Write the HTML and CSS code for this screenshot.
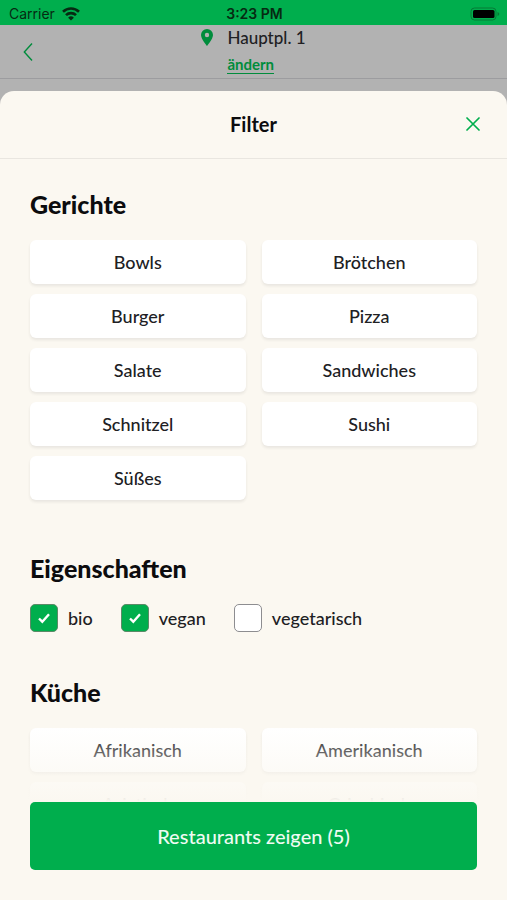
FILE: index.html
```html
<!DOCTYPE html>
<html lang="de">
<head>
<meta charset="utf-8">
<meta name="viewport" content="width=device-width, initial-scale=1">
<title>Filter</title>
<link rel="stylesheet" href="styles.css">
</head>
<body>
<div class="status">
  <div class="carrier">Carrier
    <svg width="18" height="14" viewBox="0 0 18 14" fill="none" stroke="#062a12" stroke-width="2.6" aria-hidden="true"><path d="M1 4.7a11.5 11.5 0 0 1 16 0M4 8.2a7 7 0 0 1 10 0"/><path d="M9 13.6 6.1 10.7a4.2 4.2 0 0 1 5.8 0z" fill="#062a12" stroke="none"/></svg>
  </div>
  <div class="time">3:23 PM</div>
  <svg class="battery" width="30" height="14" viewBox="0 0 30 14" aria-hidden="true"><rect x="1" y="1" width="25" height="12" rx="3.5" fill="none" stroke="#067a37"/><rect x="3" y="3" width="21.500" height="8" rx="1.500"/><path d="M27.500 5v4q1.800-.5 1.800-2t-1.800-2z" fill="#067a37"/></svg>
</div>
<main class="screen">
  <header class="topbar">
    <button class="back" aria-label="Zurück"><svg width="10" height="20" viewBox="0 0 10 20" fill="none" stroke="#008c3c" stroke-width="1.400"><path d="M9 1.500 1.300 10 9 18.500"/></svg></button>
    <div class="location">
      <svg class="pin" width="12" height="17" viewBox="0 0 12 17" aria-hidden="true"><path fill="#008c3c" fill-rule="evenodd" d="M6 0a6 6 0 0 0-6 6c0 4 6 11 6 11s6-7 6-11a6 6 0 0 0-6-6zm0 3.800a2.200 2.200 0 1 1 0 4.400 2.200 2.200 0 0 1 0-4.400z"/></svg>
      <div class="address"><span>Hauptpl. 1</span><a href="#">ändern</a></div>
    </div>
  </header>
  <section class="sheet" role="dialog" aria-labelledby="title">
    <div class="sheet-head">
      <h1 id="title">Filter</h1>
      <button class="close" aria-label="Schließen"><svg width="14" height="14" viewBox="0 0 14 14" fill="none" stroke="#00ae4d" stroke-width="1.700" stroke-linecap="round"><path d="m1 1 12 12M13 1 1 13"/></svg></button>
    </div>
    <div class="content">
      <h2>Gerichte</h2>
      <div class="grid">
        <button>Bowls</button><button>Brötchen</button>
        <button>Burger</button><button>Pizza</button>
        <button>Salate</button><button>Sandwiches</button>
        <button>Schnitzel</button><button>Sushi</button>
        <button>Süßes</button>
      </div>
      <h2>Eigenschaften</h2>
      <div class="checks">
        <label><span class="box"><input type="checkbox" checked><svg viewBox="0 0 14 12" aria-hidden="true"><path d="M2 6.500 5.300 9.700 12 2.300"/></svg></span>bio</label>
        <label><span class="box"><input type="checkbox" checked><svg viewBox="0 0 14 12" aria-hidden="true"><path d="M2 6.500 5.300 9.700 12 2.300"/></svg></span>vegan</label>
        <label><span class="box"><input type="checkbox"></span>vegetarisch</label>
      </div>
      <h2>Küche</h2>
      <div class="grid">
        <button>Afrikanisch</button><button>Amerikanisch</button>
        <button>Asiatisch</button><button>Griechisch</button>
      </div>
    </div>
    <div class="footer"><button class="submit">Restaurants zeigen (5)</button></div>
  </section>
</main>
</body>
</html>
```
FILE: styles.css
```css
* { box-sizing: border-box; }
body {
  margin: 0;
  height: 100vh;
  display: flex;
  flex-direction: column;
  background: #b2b2b2;
  color: #202023;
  font-family: Lato, sans-serif;
  font-size: 18px;
  font-weight: 500;
}
button {
  font: inherit;
  color: inherit;
  border: 0;
  padding: 0;
  background: none;
}
svg { display: block; }
h1, h2 { margin: 0; }

.status {
  height: 25px;
  padding: 2px 7px 0 9px;
  display: grid;
  grid-template-columns: 1fr auto 1fr;
  align-items: center;
  background: #00ae4d;
  color: #062a12;
  font: 14px/23px Inter, sans-serif;
}
.carrier { display: flex; align-items: center; gap: 7px; }
.time { font-weight: 600; }
.battery { justify-self: end; }

.screen { flex: 1; min-height: 0; display: flex; flex-direction: column; }
.topbar {
  height: 54px;
  display: grid;
  grid-template-columns: 1fr auto 1fr;
  align-items: center;
  padding: 0 23px;
  border-bottom: 1px solid #9c9c9f;
}
.back { justify-self: start; }
.location {
  display: flex;
  gap: 14px;
  align-self: start;
}
.pin { margin-top: 4px; }
.address { display: flex; flex-direction: column; align-items: flex-start; gap: 5px; line-height: 26px; font-size: 17px; }
.address span { white-space: nowrap; }
.address a {
  color: #008c3c;
  font-size: 15px;
  font-weight: 700;
  line-height: 17px;
  text-decoration: none;
  border-bottom: 1px solid;
}

.sheet {
  flex: 1;
  min-height: 0;
  margin-top: 12px;
  display: flex;
  flex-direction: column;
  position: relative;
  background: #fbf8f1;
  border-radius: 14px 14px 0 0;
}
.sheet-head {
  flex: none;
  height: 68px;
  padding: 0 27px 2px;
  display: grid;
  grid-template-columns: 1fr auto 1fr;
  align-items: center;
  border-bottom: 1px solid #e9e6e0;
}
h1 { grid-column: 2; font-size: 20px; font-weight: 700; color: #0c0c0e; }
.close { justify-self: end; }

.content { flex: 1; min-height: 0; overflow: hidden; padding: 29px 30px 0; }
h2 {
  font-size: 25px;
  line-height: 32px;
  font-weight: 900;
  color: #0c0c0e;
}
.grid {
  display: grid;
  grid-template-columns: 1fr 1fr;
  gap: 10px 16px;
  margin: 20px 0 52px;
}
.grid button {
  height: 44px;
  background: #fff;
  border-radius: 6px;
  box-shadow: 0 2px 3px rgba(40, 40, 60, .09);
}
.checks { display: flex; gap: 28px; margin: 20px 0 44px; }
.checks label { display: flex; align-items: center; gap: 10px; }
.box { display: grid; width: 28px; height: 28px; }
.box > * { grid-area: 1 / 1; }
.box input {
  appearance: none;
  width: 28px;
  height: 28px;
  margin: 0;
  background: #fff;
  border: 1px solid #8d8d90;
  border-radius: 5px;
}
.box input:checked { background: #00ae4d; border-color: #5b8a67; }
.box svg {
  width: 14px;
  place-self: center;
  pointer-events: none;
  fill: none;
  stroke: #fff;
  stroke-width: 2.4;
}

.footer {
  position: absolute;
  left: 0;
  right: 0;
  bottom: 0;
  padding: 74px 30px 30px;
  background: linear-gradient(rgba(251, 248, 241, 0), #fbf8f1 74px);
}
.submit {
  width: 100%;
  height: 68px;
  border-radius: 5px;
  background: #00ae4d;
  color: #effbf2;
  font-size: 20px;
}
```
